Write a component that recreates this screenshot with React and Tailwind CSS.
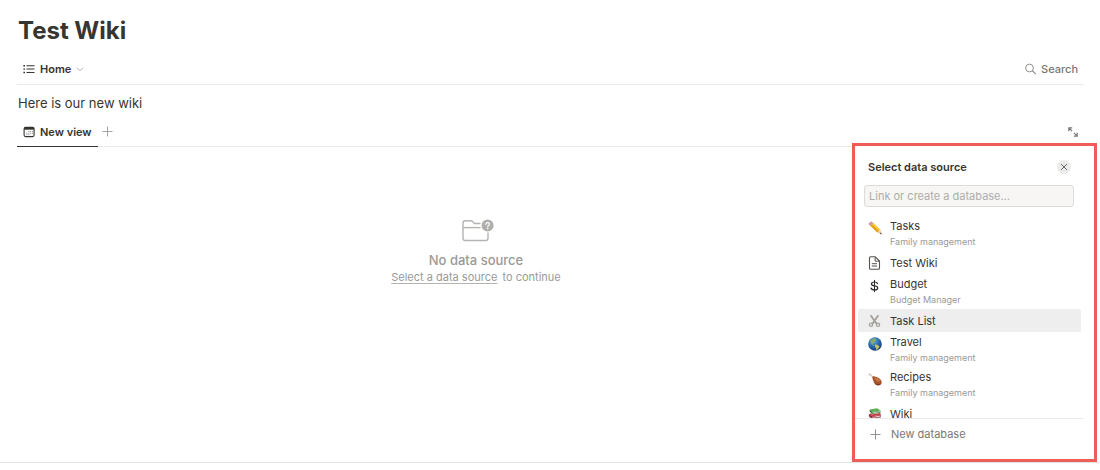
import { useState } from "react";

const PencilIcon = () => (
  <svg width="14" height="14" viewBox="0 0 14 14" aria-hidden="true">
    <path d="M.8 2.500 2.500.7Q3.300.3 4 .9l1.500 1.400-2.700 2.800L1 3.700Q.3 3.100.8 2.500Z" fill="#e28fa3" />
    <path d="m4.700 1.500 1.200 1.100-2.800 2.900L1.900 4.300Z" fill="#a9b4bd" />
    <path d="m5.500 2.100 6.800 6.500-2.900 2.900-6.900-6.700Z" fill="#fbca3c" />
    <path d="m3.900 3.500 7 6.500-1.500 1.500-6.900-6.700Z" fill="#e79b1d" />
    <path d="m12.300 8.600 1.400 4.800-4.300-1.900Z" fill="#eccb9c" />
    <path d="m13.100 11.600.6 1.800-1.900-.8Z" fill="#3c3a37" />
  </svg>
);

const PageIcon = () => (
  <svg width="14" height="14" viewBox="0 0 14 14" fill="none" stroke="#55534e" strokeLinejoin="round" aria-hidden="true">
    <path d="M1.500 1.800Q1.500.8 2.500.8h4.800L11.500 5v7.200q0 1-1 1h-8q-1 0-1-1Z" strokeWidth="1.100" />
    <path d="M7.200 1v4.200h4.100M3.800 7.700H9M3.800 10H9" />
  </svg>
);

const DollarIcon = () => (
  <svg width="14" height="14" viewBox="0 0 14 14" fill="none" stroke="#2b2a27" strokeLinecap="round" aria-hidden="true">
    <path d="M6.500 1.300v11.400" />
    <path d="M9.500 4.700C9.200 3.600 8.200 3 6.500 3c-1.900 0-3 .7-3 1.900 0 2.900 6.200 1.200 6.200 4 0 1.300-1.300 2-3.200 2s-3.200-.7-3.500-1.900" strokeWidth="1.200" />
  </svg>
);

const ScissorsIcon = () => (
  <svg width="14" height="14" viewBox="0 0 14 14" fill="none" stroke="#a5a19a" aria-hidden="true">
    <path d="M2.600 1.300 8.600 9.800M10.400 1.300 4.400 9.800" strokeWidth="1.900" />
    <circle cx="3" cy="10.700" r="1.600" strokeWidth="1.300" />
    <circle cx="10" cy="10.700" r="1.600" strokeWidth="1.300" />
  </svg>
);

const GlobeIcon = () => (
  <svg width="14" height="14" viewBox="0 0 14 14" aria-hidden="true">
    <defs>
      <radialGradient id="ocean" cx="0.4" cy="0.3" r="0.75">
        <stop offset="0" stopColor="#5aa9e6" />
        <stop offset="0.55" stopColor="#2766b1" />
        <stop offset="1" stopColor="#123668" />
      </radialGradient>
    </defs>
    <circle cx="7" cy="7" r="6.800" fill="url(#ocean)" />
    <path d="M2.300 3.800C3.200 2.300 4.800 1.300 6.800 1.200l1.500.8-.8 1 .9.700-1.700 1.200-1 1.500-1.200-.3.400 1.300 1.400.8-.9.200-1.800-1.100-1.200-2Z" fill="#86a868" />
    <path d="m7 7.600 2.200.2 2.300 1.400-.7 1.600-1.500 1.700-1 .6-.4-2.100-1.100-1.700Z" fill="#c6bf66" />
    <path d="m10 1.500 1.800 1.500-.9.300Z" fill="#8fb07a" />
  </svg>
);

const DrumstickIcon = () => (
  <svg width="14" height="14" viewBox="0 0 14 14" aria-hidden="true">
    <path d="M.3 2.700q.2-.8 1.100-.6Q1.600 1 2.600 1.300q.7.300.5 1.300l3 2.600-1.200 1.100-2.700-3Q.2 4 .3 2.700Z" fill="#d3cabb" />
    <path d="M4.300 5.500C4.500 4.500 5.300 4.100 6.600 4.400c3.400.4 6.900 2.900 7.100 5.600.2 2.300-1.600 3.600-3.900 3.400-3.200-.3-4.400-3.500-5.500-7.900Z" fill="#a4532a" />
    <path d="M6.200 5.200c2.700.2 5.400 1.700 6.100 3.700-1.200 1.400-3.500.6-4.600-.9Z" fill="#c9793f" />
    <path d="M6.800 10.400c1.700 2.100 4.200 2.400 6.200 1.100-1.200 1.900-4.800 2.500-6.200-1.100Z" fill="#713317" />
  </svg>
);

const BooksIcon = () => (
  <svg width="14" height="14" viewBox="0 0 14 14" aria-hidden="true">
    <path d="m1.600 2.500 7.400-1.200 3.500 2.300-8.300 1.300Z" fill="#5fae57" />
    <path d="M1.600 2.500 4.200 4.900v2L1.600 4.600Z" fill="#2e6f35" />
    <path d="m4.200 4.900 8.300-1.300v2.200L4.200 7Z" fill="#3f8e42" />
    <path d="m4.900 5.500 7.200-1.200v.7l-7.200 1.200Z" fill="#dfe8d8" />
    <path d="m.9 7.200 1.700-.9 1.600.9 8-1.200.7 1.800-8.700 1.500Z" fill="#c8414b" />
    <path d="m.9 7.200 3.300 2.100v2.300L.9 9.200Z" fill="#96222f" />
    <path d="m4.200 9.300 8.700-1.500v2.300l-8.700 1.500Z" fill="#a92b38" />
    <path d="m4.900 9.900 7.700-1.400v.9l-7.700 1.400Z" fill="#ecdcd9" />
    <path d="m1.500 9.900 2.700 1.700 8.300-1.300.4 1.700-8.700 1.500-2.700-1.800Z" fill="#3d6fa3" />
  </svg>
);

const FolderIcon = () => (
  <svg className="ml-1" width="32" height="24" viewBox="0 0 32 24" fill="none" aria-hidden="true">
    <path
      d="M18 4.500h-5.700L10.500 2.400Q9.900 1.700 9 1.700H3.200Q1 1.700 1 3.900v15.400q0 2.200 2.200 2.200h20.600q2.200 0 2.200-2.200V14"
      stroke="#b5b4b1"
      strokeWidth="1.400"
      strokeLinecap="round"
    />
    <path d="M1 8.600h17.600" stroke="#b5b4b1" strokeWidth="1.400" />
    <circle cx="25.600" cy="6.600" r="6" fill="#b0afac" />
    <path d="M23.800 5.300q.1-1.700 1.900-1.700 1.800 0 1.800 1.500 0 .9-1 1.400-.8.500-.8 1.200" stroke="#fff" strokeWidth="1.200" strokeLinecap="round" />
    <circle cx="25.700" cy="9.600" r=".8" fill="#fff" />
  </svg>
);

const ListIcon = () => (
  <svg width="12" height="12" viewBox="0 0 12 12" fill="#37352f" aria-hidden="true">
    <path d="M.4 2h1.600v1.400H.4zM.4 5.400h1.600v1.400H.4zM.4 8.800h1.600v1.400H.4zM3.500 2.200h8v1h-8zM3.500 5.600h8v1h-8zM3.500 9h8v1h-8z" />
  </svg>
);

const CalendarIcon = () => (
  <svg width="12" height="12" viewBox="0 0 12 12" aria-hidden="true">
    <rect x="1.100" y="1.400" width="10" height="9.200" rx="1.500" fill="none" stroke="#37352f" strokeWidth="1.100" />
    <path d="M1.100 1.700h10v2h-10z" fill="#37352f" />
    <path d="M5.400 5h1v1h-1zM7.200 5h1v1h-1zM9 5h.9v1H9zM3.300 6.700h1v1h-1zM5.400 6.700h1v1h-1zM7.200 6.700h1v1h-1zM9 6.700h.9v1H9zM3.300 8.300h1v1h-1zM5.400 8.300h1v1h-1z" fill="#8b8984" />
  </svg>
);

const ExpandIcon = () => (
  <svg width="10" height="10" viewBox="0 0 10 10" fill="none" stroke="#787774" strokeWidth="1.200" aria-hidden="true">
    <path d="M.8 4.200V.8h3.400M.8.800l3.300 3.300M5.800 9.200h3.400V5.800M9.200 9.200 5.900 5.900" />
  </svg>
);

const PlusIcon = ({ color }) => (
  <svg width="11" height="11" viewBox="0 0 11 11" stroke={color} aria-hidden="true">
    <path d="M5.500.5v10M.5 5.500h10" />
  </svg>
);

const sources = [
  { name: "Tasks", parent: "Family management", icon: PencilIcon },
  { name: "Test Wiki", icon: PageIcon },
  { name: "Budget", parent: "Budget Manager", icon: DollarIcon },
  { name: "Task List", icon: ScissorsIcon },
  { name: "Travel", parent: "Family management", icon: GlobeIcon },
  { name: "Recipes", parent: "Family management", icon: DrumstickIcon },
  { name: "Wiki", icon: BooksIcon },
];

const SourceItem = ({ source, active, onHover }) => {
  const Icon = source.icon;
  return (
    <li>
      <button
        type="button"
        onMouseEnter={onHover}
        className={`flex w-full gap-2 rounded-xs pl-2.5 text-left ${
          source.parent ? "h-[35px] pt-[3px]" : "h-[23px] items-center"
        } ${active ? "bg-[#eeeeee]" : ""}`}
      >
        <span className={source.parent ? "pt-0.5" : ""}>
          <Icon />
        </span>
        <span>
          <span className="block text-[11px] leading-[14px] text-[#37352f]">{source.name}</span>
          {source.parent && (
            <span className="block text-[9px] leading-[18px] text-[#9b9a97]">{source.parent}</span>
          )}
        </span>
      </button>
    </li>
  );
};

const SourcePanel = () => {
  const [query, setQuery] = useState("");
  const [active, setActive] = useState("Task List");

  return (
    <aside className="-mt-1 -mr-[13px] w-[245px] shrink-0 border-3 border-[#ee5d57] bg-white pb-[17px]">
      <div className="flex items-center justify-between pt-3.5 pr-[23px] pl-[13px]">
        <h2 className="text-[11px] leading-[14px] font-semibold text-[#37352f]">Select data source</h2>
        <button
          type="button"
          aria-label="Close"
          className="flex size-3.5 items-center justify-center rounded-full bg-[#ebebea]"
        >
          <svg width="8" height="8" viewBox="0 0 8 8" stroke="#6b6965" aria-hidden="true">
            <path d="m1 1 6 6M7 1 1 7" />
          </svg>
        </button>
      </div>
      <div className="pt-[11px] pr-5 pl-[9px]">
        <input
          type="text"
          aria-label="Link or create a database"
          placeholder="Link or create a database…"
          value={query}
          onChange={(e) => setQuery(e.target.value)}
          className="block h-[22px] w-full rounded-[3px] border border-[#dcdcda] bg-[#f7f6f5] px-1 text-[11px] text-[#37352f] outline-none placeholder:text-[#aeada9]"
        />
      </div>
      <ul className="mt-[9px] mr-[13px] ml-[3px] max-h-[202px] overflow-hidden">
        {sources.map((source) => (
          <SourceItem
            key={source.name}
            source={source}
            active={active === source.name}
            onHover={() => setActive(source.name)}
          />
        ))}
      </ul>
      <div className="mr-2.5 border-t border-[#e9e9e7] pt-[7px] pl-[15px]">
        <button type="button" className="flex items-center gap-2.5 text-[11px] leading-4 text-[#787774]">
          <PlusIcon color="#91908c" />
          New database
        </button>
      </div>
    </aside>
  );
};

const App = () => {
  return (
    <div className="border-b border-[#e3e3e1] bg-white pr-4 pl-[17px] font-['Inter',sans-serif] text-[#37352f]">
      <h1 className="pt-[17px] pl-px text-2xl leading-7 font-bold">Test Wiki</h1>

      <header className="mt-[9px] flex h-[31px] items-center justify-between border-b border-[#e9e9e7] px-1.5">
        <button type="button" className="flex items-center gap-[5px] text-[11px] font-semibold">
          <ListIcon />
          Home
          <svg width="8" height="5" viewBox="0 0 8 5" fill="none" stroke="#b5b4b1" aria-hidden="true">
            <path d="m1 .8 3 3 3-3" />
          </svg>
        </button>
        <button type="button" className="flex items-center gap-1 text-[11px] font-medium text-[#787774]">
          <svg width="13" height="12" viewBox="0 0 13 12" fill="none" stroke="#91908c" aria-hidden="true">
            <circle cx="5.500" cy="5" r="3.900" />
            <path d="m8.400 7.800 3.400 3.300" strokeWidth="1.200" />
          </svg>
          Search
        </button>
      </header>

      <p className="pt-2 pl-px text-[13px] leading-5">Here is our new wiki</p>

      <section>
        <div className="mt-1 flex h-[30px] items-stretch justify-between border-b border-[#e9e9e7]">
          <div className="flex">
            <button
              type="button"
              className="-mb-px flex items-center gap-[5px] border-b border-[#37352f] px-1.5 pt-px text-[11px] font-semibold"
            >
              <CalendarIcon />
              New view
            </button>
            <button type="button" aria-label="Add a view" className="ml-1">
              <PlusIcon color="#a5a4a0" />
            </button>
          </div>
          <button type="button" aria-label="Open as full page" className="pr-1.5">
            <ExpandIcon />
          </button>
        </div>

        <div className="flex">
          <div className="flex flex-1 flex-col items-center pt-[72px] pl-[83px] text-[#9b9a97]">
            <FolderIcon />
            <p className="mt-2 text-[13px] leading-[18px] font-medium">No data source</p>
            <p className="text-[11px] leading-4">
              <a href="#sources" className="mr-0.5 underline decoration-[#b5b4b1] decoration-1 underline-offset-2">
                Select a data source
              </a>{" "}
              to continue
            </p>
          </div>
          <SourcePanel />
        </div>
      </section>
    </div>
  );
};

export default App;
